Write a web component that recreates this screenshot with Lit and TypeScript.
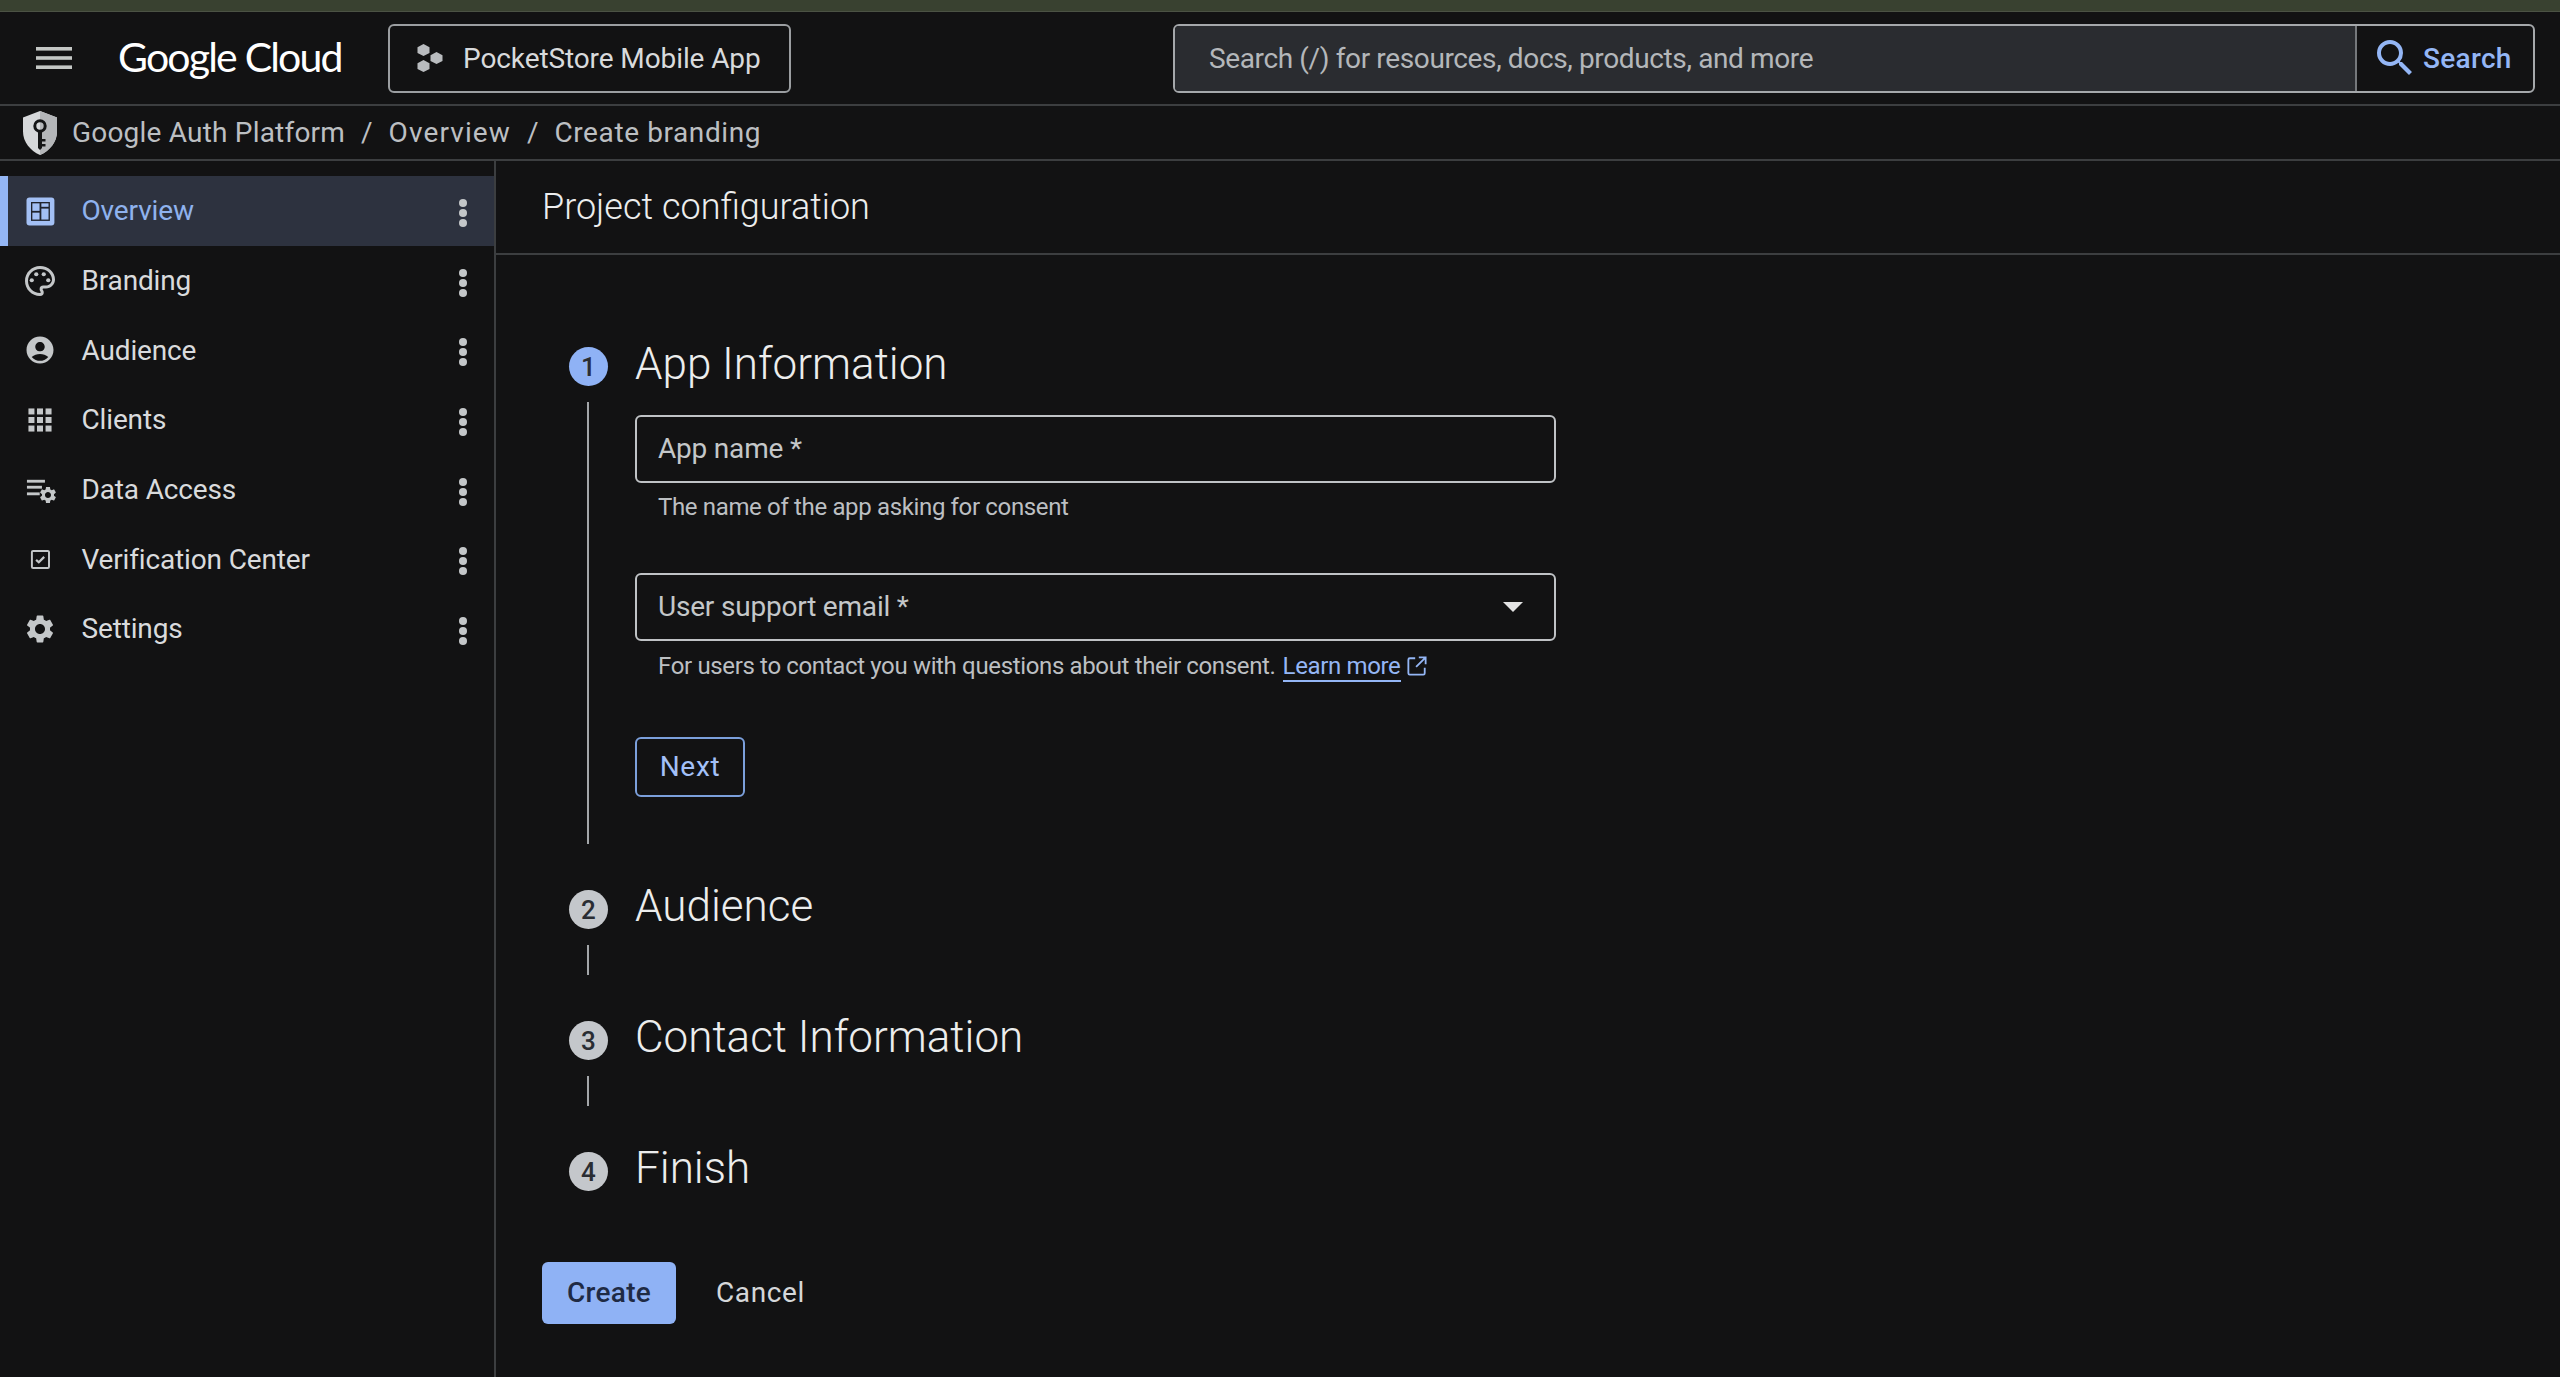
import { LitElement, html, css, svg } from "lit";
import { customElement } from "lit/decorators.js";

const GEAR =
  "M19.14 12.94c.04-.3.06-.61.06-.94 0-.32-.02-.64-.07-.94l2.03-1.58c.18-.14.23-.41.12-.61l-1.92-3.32c-.12-.22-.37-.29-.59-.22l-2.39.96c-.5-.38-1.03-.7-1.62-.94l-.36-2.54c-.04-.24-.24-.41-.48-.41h-3.84c-.24 0-.43.17-.47.41l-.36 2.54c-.59.24-1.13.57-1.62.94l-2.39-.96c-.22-.08-.47 0-.59.22L2.74 8.87c-.12.21-.08.47.12.61l2.03 1.58c-.05.3-.09.63-.09.94s.02.64.07.94l-2.03 1.58c-.18.14-.23.41-.12.61l1.92 3.32c.12.22.37.29.59.22l2.39-.96c.5.38 1.03.7 1.62.94l.36 2.54c.05.24.24.41.48.41h3.84c.24 0 .44-.17.47-.41l.36-2.54c.59-.24 1.13-.56 1.62-.94l2.39.96c.22.08.47 0 .59-.22l1.92-3.32c.12-.22.07-.47-.12-.61l-2.01-1.58zM12 15.6c-1.98 0-3.6-1.62-3.6-3.6s1.62-3.6 3.6-3.6 3.6 1.62 3.6 3.6-1.62 3.6-3.6 3.6z";

const ICONS: Record<string, unknown> = {
  overview: svg`<rect x="3" y="3" width="18.600" height="18.600" rx="2" fill="currentColor"/>
    <rect x="6" y="6" width="12.600" height="12.600" fill="#20242e"/>
    <g fill="currentColor"><rect x="6.900" y="6.900" width="4.800" height="5"/><rect x="12.900" y="6.900" width="4.800" height="2.300"/><rect x="6.900" y="13.100" width="4.800" height="4.600"/><rect x="12.900" y="10.400" width="4.800" height="7.300"/></g>`,
  palette: svg`<path fill="currentColor" d="M12 22C6.49 22 2 17.51 2 12S6.49 2 12 2s10 4.04 10 9c0 3.31-2.69 6-6 6h-1.77c-.28 0-.5.22-.5.5 0 .12.05.23.13.33.41.47.64 1.06.64 1.67A2.5 2.5 0 0112 22zm0-18c-4.41 0-8 3.59-8 8s3.59 8 8 8c.28 0 .5-.22.5-.5a.54.54 0 00-.14-.35c-.41-.46-.63-1.05-.63-1.65a2.5 2.5 0 012.5-2.5H16c2.21 0 4-1.79 4-4 0-3.86-3.59-7-8-7z"/>
    <g fill="currentColor"><circle cx="6.500" cy="11.500" r="1.400"/><circle cx="9.500" cy="7.500" r="1.400"/><circle cx="14.500" cy="7.500" r="1.400"/><circle cx="17.500" cy="11.500" r="1.400"/></g>`,
  account: svg`<g transform="translate(12 12) scale(.9) translate(-12 -12)"><path fill="currentColor" d="M12 2C6.48 2 2 6.48 2 12s4.48 10 10 10 10-4.48 10-10S17.52 2 12 2zm0 4c1.93 0 3.5 1.57 3.5 3.5S13.93 13 12 13s-3.5-1.57-3.5-3.5S10.07 6 12 6zm0 14c-2.03 0-4.43-.82-6.14-2.88C7.55 15.8 9.68 15 12 15s4.45.8 6.14 2.12C16.43 19.18 14.03 20 12 20z"/></g>`,
  apps: svg`<g fill="currentColor"><rect x="4.300" y="4.300" width="4" height="4"/><rect x="10" y="4.300" width="4" height="4"/><rect x="15.700" y="4.300" width="4" height="4"/><rect x="4.300" y="10" width="4" height="4"/><rect x="10" y="10" width="4" height="4"/><rect x="15.700" y="10" width="4" height="4"/><rect x="4.300" y="15.700" width="4" height="4"/><rect x="10" y="15.700" width="4" height="4"/><rect x="15.700" y="15.700" width="4" height="4"/></g>`,
  data: svg`<g fill="currentColor"><rect x="3.300" y="5.200" width="12" height="1.900"/><rect x="3.300" y="9.200" width="10" height="1.900"/><rect x="3.300" y="13.600" width="8.500" height="1.900"/>
    <g transform="translate(10.600 8.600) scale(.56)"><path d="${GEAR}"/></g></g>`,
  verify: svg`<rect x="6.600" y="6.600" width="11.400" height="11.400" rx=".8" fill="none" stroke="currentColor" stroke-width="1.300"/>
    <path d="M9.400 12.600l1.800 1.600 3.600-3.600" fill="none" stroke="currentColor" stroke-width="1.500"/>`,
  settings: svg`<g transform="translate(12 12) scale(.93) translate(-12 -12)"><path fill="currentColor" d="${GEAR}"/></g>`,
};

const NAV = [
  { label: "Overview", icon: "overview", active: true },
  { label: "Branding", icon: "palette" },
  { label: "Audience", icon: "account" },
  { label: "Clients", icon: "apps" },
  { label: "Data Access", icon: "data" },
  { label: "Verification Center", icon: "verify" },
  { label: "Settings", icon: "settings" },
];

@customElement("app-root")
export class AppRoot extends LitElement {
  static styles = css`
    :host {
      display: block;
      height: 1377px;
      overflow: hidden;
      background: #121213;
      color: #e3e3e3;
      font-family: Roboto, "Liberation Sans", sans-serif;
      font-size: 28px;
    }
    svg {
      display: block;
      flex: none;
    }
    .strip {
      height: 11px;
      background: #394130;
      border-bottom: 1px solid #4b5244;
    }
    .topbar {
      height: 92px;
      border-bottom: 2px solid #3c3e40;
      display: flex;
      align-items: center;
    }
    .menu {
      margin-left: 36px;
      color: #c4c7c5;
    }
    .logo {
      margin-left: 46px;
      margin-bottom: 4px;
      width: 270px;
      font-family: Lato, sans-serif;
      font-size: 41px;
      letter-spacing: -1.8px;
      color: #fff;
      white-space: nowrap;
    }
    .project {
      width: 403px;
      height: 69px;
      box-sizing: border-box;
      border: 2px solid #9b9ea1;
      border-radius: 6px;
      display: flex;
      align-items: center;
      padding-left: 27px;
      gap: 20px;
      color: #d8dadc;
      letter-spacing: -0.1px;
    }
    .project svg {
      color: #b9bcbf;
    }
    .search {
      margin-left: 382px;
      width: 1362px;
      height: 69px;
      box-sizing: border-box;
      border: 2px solid #a5a8ab;
      border-radius: 6px;
      display: flex;
      overflow: hidden;
    }
    .search-input {
      flex: 1;
      background: #2a2c30;
      display: flex;
      align-items: center;
      padding-left: 34px;
      color: #b4b7ba;
      letter-spacing: -0.37px;
    }
    .search-btn {
      width: 178px;
      border-left: 2px solid #75787b;
      box-sizing: border-box;
      display: flex;
      align-items: center;
      padding-left: 14px;
      gap: 4px;
      color: #94b6f5;
      font-weight: 500;
      letter-spacing: 0.3px;
    }
    .crumbs {
      height: 53px;
      border-bottom: 2px solid #3c3e40;
      display: flex;
      align-items: center;
      padding-left: 22px;
      color: #bcbfc2;
    }
    .crumbs .shield {
      margin-right: 14px;
    }
    .crumbs .sep {
      margin: 0 16px;
    }
    .crumb-root {
      letter-spacing: 0.2px;
    }
    .crumb-overview {
      letter-spacing: 1.1px;
    }
    .crumb-page {
      letter-spacing: 0.6px;
    }
    .body {
      display: flex;
      height: 1216px;
    }
    .side {
      width: 494px;
      border-right: 2px solid #3c3e40;
      padding-top: 15px;
      flex: none;
    }
    .nav-row {
      height: 69.7px;
      box-sizing: border-box;
      display: flex;
      align-items: center;
      padding-left: 22px;
      gap: 23.5px;
      color: #d9dbdd;
      letter-spacing: -0.15px;
    }
    .nav-row .nav-icon {
      color: #c4c7c9;
    }
    .nav-row.active {
      background: #2d323f;
      border-left: 8px solid #94b6f5;
      padding-left: 14px;
      color: #8fb2ee;
    }
    .nav-row.active .nav-icon {
      color: #a3c0f5;
    }
    .nav-row .label {
      flex: 1;
    }
    .kebab {
      margin-right: 27px;
      color: #c4c7c9;
      margin-top: 4px;
    }
    .main {
      flex: 1;
    }
    .main-head {
      height: 94px;
      border-bottom: 2px solid #3c3e40;
      box-sizing: border-box;
      padding: 0 46px 0;
      display: flex;
      align-items: center;
      font-size: 36px;
      font-weight: 300;
      color: #eceded;
    }
    .stepper {
      padding: 92px 0 0 73px;
    }
    .step {
      display: grid;
      grid-template-columns: 39px 1fr;
      column-gap: 27px;
      margin-bottom: 46px;
    }
    .step.last {
      margin-bottom: 71px;
    }
    .rail {
      display: flex;
      flex-direction: column;
      align-items: center;
    }
    .num {
      width: 39px;
      height: 39px;
      border-radius: 50%;
      background: #c4c7cb;
      color: #2a2d33;
      font-size: 26px;
      font-weight: 500;
      display: flex;
      align-items: center;
      justify-content: center;
      flex: none;
    }
    .step.current .num {
      background: #8fb2f5;
    }
    .line {
      width: 2px;
      flex: 1;
      min-height: 30px;
      margin: 16px 1px 0 0;
      background: #a3a6a9;
    }
    h2 {
      margin: 0;
      font-size: 44px;
      line-height: 32px;
      font-weight: 300;
      color: #eceded;
    }
    .step.current h2 {
      line-height: 34px;
      margin-bottom: 34px;
    }
    .form {
      width: 921px;
      padding-bottom: 47px;
    }
    .field {
      height: 68px;
      box-sizing: border-box;
      border: 2px solid #bfc2c5;
      border-radius: 6px;
      display: flex;
      align-items: center;
      justify-content: space-between;
      padding: 0 31px 1px 21px;
      color: #c4c7c9;
      letter-spacing: -0.2px;
    }
    .caret {
      width: 0;
      height: 0;
      border-left: 10px solid transparent;
      border-right: 10px solid transparent;
      border-top: 10px solid #e3e3e3;
    }
    .hint {
      padding-left: 23px;
      font-size: 24px;
      line-height: 30px;
      color: #bcbfc2;
      letter-spacing: -0.35px;
      display: flex;
      align-items: center;
      margin-top: 9px;
      margin-bottom: 51px;
    }
    .hint.email {
      margin-bottom: 55px;
    }
    .link {
      color: #94b6f5;
      margin-left: 7px;
      border-bottom: 2px solid #94b6f5;
      line-height: 28px;
      margin-top: 2px;
    }
    .hint svg {
      color: #94b6f5;
      margin-left: 6px;
    }
    .btn {
      display: flex;
      align-items: center;
      justify-content: center;
      box-sizing: border-box;
      border-radius: 6px;
      padding-bottom: 2px;
      letter-spacing: 0.3px;
    }
    .btn.next {
      width: 110px;
      height: 60px;
      border: 2px solid #7b9fdb;
      color: #a3c0f8;
      letter-spacing: 0.7px;
    }
    .actions {
      display: flex;
      align-items: center;
      padding-left: 46px;
      gap: 40px;
    }
    .btn.create {
      width: 134px;
      height: 62px;
      background: #8fb2f5;
      color: #1f2a44;
      font-weight: 500;
    }
    .cancel {
      color: #d5d7d9;
      letter-spacing: 0.6px;
      padding-bottom: 2px;
    }
  `;

  private renderStep(n: number, title: string) {
    return html`<div class="step ${n === 4 ? "last" : ""}">
      <div class="rail">
        <div class="num">${n}</div>
        ${n < 4 ? html`<div class="line"></div>` : ""}
      </div>
      <h2>${title}</h2>
    </div>`;
  }

  render() {
    return html`
      <div class="strip"></div>
      <header class="topbar">
        <svg class="menu" width="36" height="22" viewBox="0 0 36 22" fill="currentColor">
          <rect width="36" height="3.6" /><rect y="9.2" width="36" height="3.6" /><rect y="18.4" width="36" height="3.6" />
        </svg>
        <div class="logo">Google Cloud</div>
        <div class="project">
          <svg width="26" height="28" viewBox="0 0 26 28" fill="currentColor">
            <polygon points="6.5,0 12.5,3.2 12.5,9 6.5,12 .5,9 .5,3.2" />
            <polygon points="19.5,8 25.5,11.2 25.5,17 19.5,20 13.5,17 13.5,11.2" />
            <polygon points="6.5,16 12.5,19.2 12.5,25 6.5,28 .5,25 .5,19.2" />
          </svg>
          <span>PocketStore Mobile App</span>
        </div>
        <div class="search">
          <div class="search-input">Search (/) for resources, docs, products, and more</div>
          <div class="search-btn">
            <svg width="48" height="48" viewBox="0 0 24 24" fill="currentColor">
              <path d="M15.5 14h-.79l-.28-.27A6.471 6.471 0 0016 9.5 6.5 6.5 0 109.5 16c1.61 0 3.09-.59 4.23-1.57l.27.28v.79l5 4.99L20.49 19l-4.99-5zm-6 0C7.01 14 5 11.99 5 9.5S7.01 5 9.5 5 14 7.01 14 9.5 11.99 14 9.5 14z" />
            </svg>
            <span>Search</span>
          </div>
        </div>
      </header>
      <nav class="crumbs">
        <svg class="shield" width="36" height="44" viewBox="0 0 36 44">
          <path fill="#d6d8da" d="M18 0l17 6.5v14C35 31 28 39.500 18 44 8 39.500 1 31 1 20.500v-14z" />
          <path fill="#b4b6b9" d="M18 0l17 6.500v14C35 31 28 39.500 18 44z" />
          <circle cx="18" cy="15" r="5.200" fill="none" stroke="#141516" stroke-width="3" />
          <path fill="#141516" d="M16 20h4v17l-2 2-2-2z M20 28h3.500v2.500H20z M20 33h3.500v2.500H20z" />
        </svg>
        <span class="crumb-root">Google Auth Platform</span><span class="sep">/</span><span class="crumb-overview">Overview</span><span class="sep">/</span><span class="crumb-page">Create branding</span>
      </nav>
      <div class="body">
        <aside class="side">
          ${NAV.map(
            (item) => html`<div class="nav-row ${item.active ? "active" : ""}">
              <svg class="nav-icon" width="36" height="36" viewBox="0 0 24 24">${ICONS[item.icon]}</svg>
              <span class="label">${item.label}</span>
              <svg class="kebab" width="8" height="28" viewBox="0 0 8 28" fill="currentColor">
                <circle cx="4" cy="4" r="4" /><circle cx="4" cy="14" r="4" /><circle cx="4" cy="24" r="4" />
              </svg>
            </div>`
          )}
        </aside>
        <main class="main">
          <div class="main-head">Project configuration</div>
          <div class="stepper">
            <div class="step current">
              <div class="rail">
                <div class="num">1</div>
                <div class="line"></div>
              </div>
              <div>
                <h2>App Information</h2>
                <div class="form">
                  <div class="field">App name *</div>
                  <div class="hint">The name of the app asking for consent</div>
                  <div class="field">User support email *<span class="caret"></span></div>
                  <div class="hint email">
                    For users to contact you with questions about their consent.
                    <span class="link">Learn more</span>
                    <svg width="20" height="20" viewBox="0 0 22 22" fill="none" stroke="currentColor" stroke-width="2">
                      <path d="M9 2.500H3a1.500 1.500 0 00-1.500 1.500v15A1.500 1.500 0 003 20.500h15a1.500 1.500 0 001.500-1.500v-6M13 1.500h7.500V9M20 2l-10 10" />
                    </svg>
                  </div>
                  <div class="btn next">Next</div>
                </div>
              </div>
            </div>
            ${this.renderStep(2, "Audience")} ${this.renderStep(3, "Contact Information")} ${this.renderStep(4, "Finish")}
          </div>
          <div class="actions">
            <div class="btn create">Create</div>
            <div class="cancel">Cancel</div>
          </div>
        </main>
      </div>
    `;
  }
}
